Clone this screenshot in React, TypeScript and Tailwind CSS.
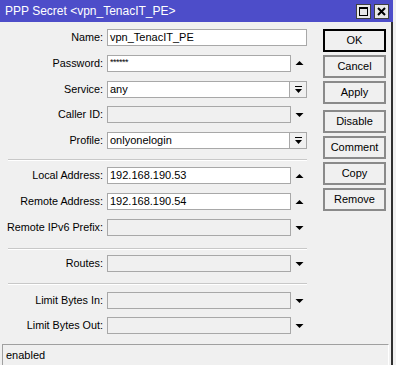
import React from 'react';

const font = { fontFamily: '"Liberation Sans", Arial, sans-serif' };

function UpArrow() {
  return (
    <svg width="9" height="6" viewBox="0 0 9 6" className="block">
      <polygon points="4.5,1 8.5,5 0.5,5" fill="#000" />
    </svg>
  );
}

function DownArrow() {
  return (
    <svg width="9" height="6" viewBox="0 0 9 6" className="block">
      <polygon points="0.5,1 8.5,1 4.5,5" fill="#000" />
    </svg>
  );
}

function ComboIcon() {
  return (
    <svg width="9" height="9" viewBox="0 0 9 9" className="block">
      <rect x="1" y="1" width="7" height="1" fill="#000" />
      <polygon points="1,4 8,4 4.5,8" fill="#000" />
    </svg>
  );
}

type Kind = 'text' | 'up' | 'down' | 'combo';

function Row({
  label,
  value,
  kind,
  disabled,
  small,
}: {
  label: string;
  value?: string;
  kind: Kind;
  disabled?: boolean;
  small?: boolean;
}) {
  const bg = disabled ? 'bg-[#f0f0f0]' : 'bg-white';
  return (
    <div className="flex items-center h-[17px]">
      <div className="w-[103px] text-right text-[10.8px] text-black whitespace-nowrap leading-none">{label}</div>
      <div className="w-[4px]" />
      {kind === 'text' && (
        <div className={`w-[200px] h-[17px] border border-[#a8a8a8] ${bg} flex items-center px-[2px] text-[11px] leading-none`}>
          {value}
        </div>
      )}
      {(kind === 'up' || kind === 'down') && (
        <>
          <div
            className={`w-[184px] h-[17px] border border-[#a8a8a8] ${bg} flex px-[2px] text-[11px] leading-none ${
              small ? 'items-start pt-[2px]' : 'items-center'
            }`}
          >
            {small ? <span className="text-[9px] tracking-[-0.5px] leading-none">{value}</span> : value}
          </div>
          <div className="w-[16px] flex justify-center">{kind === 'up' ? <UpArrow /> : <DownArrow />}</div>
        </>
      )}
      {kind === 'combo' && (
        <div className="w-[200px] h-[17px] border border-[#a8a8a8] bg-white flex text-[11px] leading-none">
          <div className="flex-1 flex items-center px-[2px]">{value}</div>
          <div className="w-[17px] border-l border-[#a8a8a8] bg-[#f0f0f0] flex items-center justify-center">
            <ComboIcon />
          </div>
        </div>
      )}
    </div>
  );
}

function Sep({ className }: { className: string }) {
  return (
    <div className={`ml-[8px] w-[299px] ${className}`}>
      <div className="h-px bg-[#c8c8c8]" />
      <div className="h-px bg-white" />
    </div>
  );
}

function Btn({ label, primary }: { label: string; primary?: boolean }) {
  return (
    <div
      className={`w-[63px] h-[23px] flex items-center justify-center text-[11px] bg-[#f0f0f0] ${
        primary ? 'border-2 border-black' : 'border-2 border-[#8a8a8a]'
      }`}
    >
      {label}
    </div>
  );
}

export default function App() {
  return (
    <div className="w-[396px] h-[365px] bg-[#f0f0f0] overflow-hidden text-black" style={font}>
      {/* Title bar */}
      <div className="flex h-[22px]">
        <div className="w-[393px] h-[22px] bg-[#4d4dc9] flex items-center pl-[5px] pr-[4px]">
          <div className="flex-1 text-white text-[12px] leading-none">PPP Secret &lt;vpn_TenacIT_PE&gt;</div>
          <div className="flex gap-[3px]">
            <div className="w-[15px] h-[15px] bg-[#e8e8e8] border border-[#404040] flex items-center justify-center">
              <div className="w-[9px] h-[9px] border border-black border-t-2" />
            </div>
            <div className="w-[15px] h-[15px] bg-[#e8e8e8] border border-[#404040] flex items-center justify-center">
              <svg width="9" height="9" viewBox="0 0 9 9">
                <path d="M1 1 L8 8 M8 1 L1 8" stroke="#000" strokeWidth="2" />
              </svg>
            </div>
          </div>
        </div>
        <div className="flex-1 bg-[#f0f0f0]" />
      </div>

      <div className="flex h-[343px]">
        <div className="w-[391px] flex flex-col">
          <div className="flex flex-1">
            {/* Form */}
            <div className="w-[316px] flex flex-col pt-[7px]">
              <div className="flex flex-col gap-[8.75px]">
                <Row label="Name:" value="vpn_TenacIT_PE" kind="text" />
                <Row label="Password:" value="******" kind="up" small />
                <Row label="Service:" value="any" kind="combo" />
                <Row label="Caller ID:" kind="down" disabled />
                <Row label="Profile:" value="onlyonelogin" kind="combo" />
              </div>
              <Sep className="mt-[10px] mb-[6px]" />
              <div className="flex flex-col gap-[9px]">
                <Row label="Local Address:" value="192.168.190.53" kind="up" />
                <Row label="Remote Address:" value="192.168.190.54" kind="up" />
                <Row label="Remote IPv6 Prefix:" kind="down" disabled />
              </div>
              <Sep className="mt-[12px] mb-[5px]" />
              <Row label="Routes:" kind="down" disabled />
              <Sep className="mt-[11px] mb-[7px]" />
              <div className="flex flex-col gap-[8px]">
                <Row label="Limit Bytes In:" kind="down" disabled />
                <Row label="Limit Bytes Out:" kind="down" disabled />
              </div>
            </div>
            {/* Buttons */}
            <div className="flex flex-col pt-[7px] pl-[7px]">
              <div className="flex flex-col gap-[3px]">
                <Btn label="OK" primary />
                <Btn label="Cancel" />
                <Btn label="Apply" />
              </div>
              <div className="flex flex-col gap-[3px] mt-[6px]">
                <Btn label="Disable" />
                <Btn label="Comment" />
                <Btn label="Copy" />
                <Btn label="Remove" />
              </div>
            </div>
          </div>
          {/* Status bar */}
          <div className="ml-[2px] mr-[2px] h-[21px] border-t border-l border-[#a0a0a0] border-r border-r-white flex items-center pl-[3px] text-[11px] leading-none">
            enabled
          </div>
        </div>
        <div className="w-[2px] bg-[#303030]" />
        <div className="flex-1 bg-[#f0f0f0]" />
      </div>
    </div>
  );
}
